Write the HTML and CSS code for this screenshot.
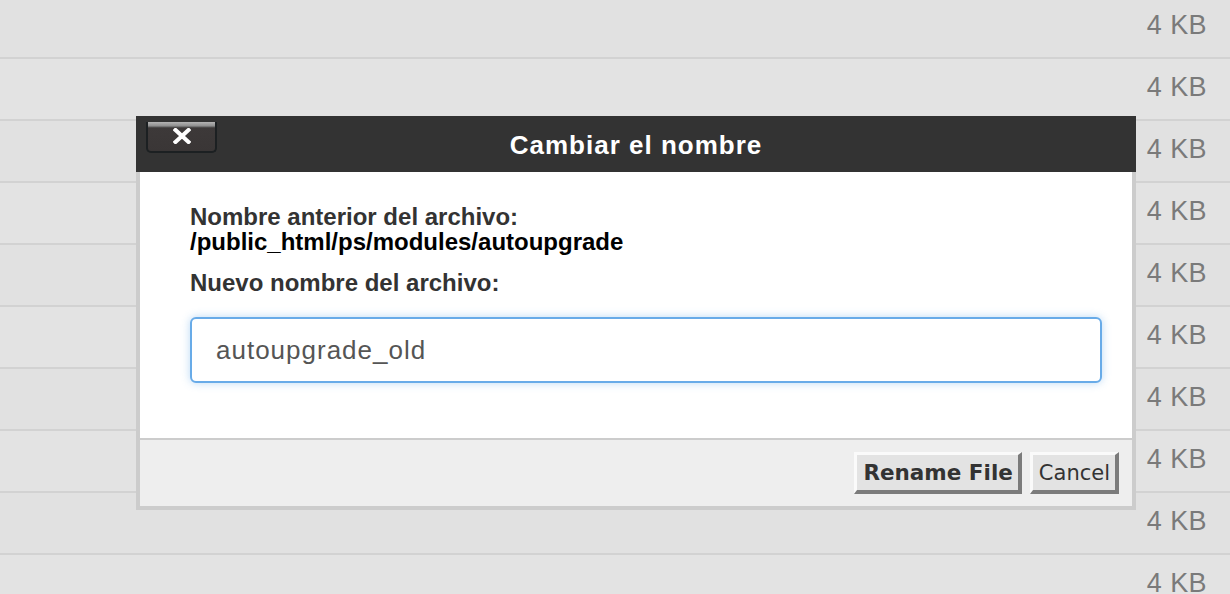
FILE: index.html
```html
<!DOCTYPE html>
<html lang="es">
<head>
<meta charset="utf-8">
<title>Cambiar el nombre</title>
<link rel="stylesheet" href="styles.css">
</head>
<body>
<div class="file-list">
  <div class="row"><span class="size">4 KB</span></div>
  <div class="row"><span class="size">4 KB</span></div>
  <div class="row"><span class="size">4 KB</span></div>
  <div class="row"><span class="size">4 KB</span></div>
  <div class="row"><span class="size">4 KB</span></div>
  <div class="row"><span class="size">4 KB</span></div>
  <div class="row"><span class="size">4 KB</span></div>
  <div class="row"><span class="size">4 KB</span></div>
  <div class="row"><span class="size">4 KB</span></div>
  <div class="row"><span class="size">4 KB</span></div>
</div>

<div class="dialog">
  <div class="dlg-head">
    <button class="close" type="button" aria-label="Cerrar">
      <svg width="18" height="16" viewBox="0 0 18 16"><path d="M2.5 2 L15.5 14 M15.5 2 L2.5 14" stroke="#fff" stroke-width="4" stroke-linecap="square" fill="none"/></svg>
    </button>
    <h1 class="dlg-title">Cambiar el nombre</h1>
  </div>
  <div class="dlg-body">
    <div class="label">Nombre anterior del archivo:</div>
    <div class="path">/public_html/ps/modules/autoupgrade</div>
    <div class="label label-new">Nuevo nombre del archivo:</div>
    <input class="name-input" type="text" value="autoupgrade_old">
  </div>
  <div class="dlg-foot">
    <button class="btn btn-primary" type="button">Rename File</button>
    <button class="btn" type="button">Cancel</button>
  </div>
</div>
</body>
</html>
```

FILE: styles.css
```css
html, body {
  margin: 0;
  padding: 0;
  overflow: hidden;
}

body {
  width: 1230px;
  height: 594px;
  background: #e2e2e2;
  font-family: "Liberation Sans", Arial, Helvetica, sans-serif;
}

.file-list {
  margin-top: -3px;
}

.row {
  height: 60px;
  border-bottom: 2px solid #d2d2d2;
  background: #e3e3e3;
  display: flex;
  align-items: center;
  justify-content: flex-end;
  padding-right: 23px;
}

.row:nth-child(odd) {
  background: #e1e1e1;
}

.size {
  font-size: 27px;
  line-height: 30px;
  letter-spacing: 0.4px;
  color: #7a7a7a;
  margin-top: -5px;
}

.dialog {
  position: absolute;
  left: 136px;
  top: 116px;
  width: 1000px;
}

.dlg-head {
  position: relative;
  height: 56px;
  background: #333333;
  display: flex;
  align-items: center;
  justify-content: center;
}

.dlg-title {
  margin: 0;
  color: #ffffff;
  font-size: 26px;
  font-weight: bold;
  letter-spacing: 1px;
  line-height: 30px;
  padding-top: 1px;
}

.close {
  position: absolute;
  left: 10px;
  top: 6px;
  width: 71px;
  height: 31px;
  padding: 0;
  border: 2px solid #1c2022;
  border-top: none;
  border-radius: 0 0 5px 5px;
  background: linear-gradient(to bottom, #b4b4b4 0, #8e8e8e 4px, #5a5a5a 5px, #3d3939 6px, #3a3636 100%);
  display: flex;
  align-items: center;
  justify-content: center;
  cursor: pointer;
}

.close svg {
  display: block;
  margin-top: -1px;
}

.dlg-body {
  background: #ffffff;
  border-left: 4px solid #cccccc;
  border-right: 4px solid #cccccc;
  padding: 32px 30px 55px 50px;
}

.label {
  font-size: 24px;
  line-height: 25px;
  font-weight: bold;
  color: #333333;
}

.path {
  font-size: 24px;
  line-height: 25px;
  font-weight: bold;
  color: #000000;
}

.label-new {
  margin-top: 16px;
}

.name-input {
  display: block;
  box-sizing: border-box;
  width: 100%;
  height: 66px;
  margin-top: 22px;
  padding: 0 24px;
  border: 2px solid #68abe8;
  border-radius: 6px;
  box-shadow: 0 0 9px rgba(102, 170, 233, 0.45);
  font-family: "Liberation Sans", Arial, Helvetica, sans-serif;
  font-size: 26px;
  letter-spacing: 1px;
  color: #555555;
  outline: none;
}

.dlg-foot {
  background: #eeeeee;
  border: 4px solid #cccccc;
  border-top: 2px solid #cccccc;
  padding: 12px 13px 12px 0;
  display: flex;
  justify-content: flex-end;
  gap: 8px;
}

.btn {
  height: 42px;
  padding: 0 5px 0 6px;
  background: #e3e3e3;
  border-style: solid;
  border-width: 3px 4px 4px 3px;
  border-color: #fafafa #7b7b7b #7b7b7b #fafafa;
  font-family: "DejaVu Sans", Verdana, sans-serif;
  font-size: 21px;
  color: #333333;
  cursor: pointer;
}

.btn-primary {
  font-weight: bold;
  font-size: 21.5px;
}
```
